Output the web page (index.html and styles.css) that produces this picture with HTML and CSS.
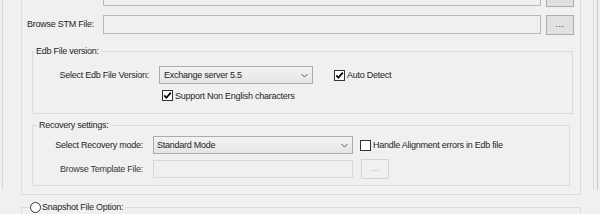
FILE: index.html
```html
<!doctype html>
<html>
<head>
<meta charset="utf-8">
<title>Edb Options</title>
<link rel="stylesheet" href="styles.css">
</head>

<body>
<div class="window">
  <div class="frame">
    <div class="outer">
      <div class="row">
        <span class="lbl">Browse Edb File:</span>
        <div class="text-box"></div>
        <div class="btn">...</div>
      </div>
      <div class="row">
        <span class="lbl">Browse STM File:</span>
        <div class="text-box"></div>
        <div class="btn">...</div>
      </div>

      <fieldset class="box box-edb">
        <legend>Edb File version:</legend>
        <div class="line">
          <span class="lbl-edb">Select Edb File Version:</span>
          <div class="combo combo-edb">
            <span>Exchange server 5.5</span>
            <svg class="arrow" width="7" height="5" viewBox="0 0 7 5"><polyline points="0.5,1 3.5,4 6.5,1" fill="none" stroke="#555" stroke-width="1"/></svg>
          </div>
          <div class="chk">
            <span class="tick"><svg width="9" height="9" viewBox="0 0 9 9"><polyline points="1.3,4.4 3.4,6.8 7.8,1.6" fill="none" stroke="#000" stroke-width="1.7"/></svg></span>
            <span>Auto Detect</span>
          </div>
        </div>
        <div class="line line-sub">
          <div class="chk">
            <span class="tick"><svg width="9" height="9" viewBox="0 0 9 9"><polyline points="1.3,4.4 3.4,6.8 7.8,1.6" fill="none" stroke="#000" stroke-width="1.7"/></svg></span>
            <span>Support Non English characters</span>
          </div>
        </div>
      </fieldset>

      <fieldset class="box box-rec">
        <legend>Recovery settings:</legend>
        <div class="line">
          <span class="lbl-rec">Select Recovery mode:</span>
          <div class="combo combo-rec">
            <span>Standard Mode</span>
            <svg class="arrow" width="7" height="5" viewBox="0 0 7 5"><polyline points="0.5,1 3.5,4 6.5,1" fill="none" stroke="#555" stroke-width="1"/></svg>
          </div>
          <div class="chk">
            <span class="tick"></span>
            <span>Handle Alignment errors in Edb file</span>
          </div>
        </div>
        <div class="line line-tpl">
          <span class="lbl-rec dim">Browse Template File:</span>
          <div class="text-box off"></div>
          <div class="btn off">...</div>
        </div>
      </fieldset>
    </div>

    <fieldset class="box box-snap">
      <legend><span class="radio"></span>Snapshot File Option:</legend>
    </fieldset>
  </div>
</div>
</body>
</html>
```

FILE: styles.css
```css
*{margin:0; padding:0; box-sizing:border-box;}
body{background:#f0f0f0; width:600px; height:214px; overflow:hidden; font:9px "Liberation Sans",Arial,sans-serif; letter-spacing:-0.25px; color:#1e1e1e; white-space:nowrap;}
.window{width:598px; height:214px; border-right:1px solid #c8c8c8;}
.frame{margin-left:2px; width:592px; height:214px; border-left:1px solid #d6d6d6; border-right:1px solid #dcdcdc;}

.outer{margin:-24px 0 0 18px; width:560px; padding:10px 6px 8px 5px; border:1px solid #dcdcdc;}
.row{display:flex; align-items:flex-start; height:20px;}
.row + .row{margin-top:8px;}
.lbl{width:76px; line-height:19px;}
.text-box{width:438px; height:19px; border:1px solid #b8b8b8; margin-right:5px;}
.btn{width:28px; height:20px; border:1px solid #adadad; background:#e1e1e1; color:#1c1c5e; text-align:center; line-height:17px; letter-spacing:0.5px;}

.box{border:1px solid #dcdcdc; margin-left:5px;}
.box legend{padding:0 2px; line-height:13px; margin-left:1px;}
.box-edb{width:541px; margin-top:10px; padding:8px 0 11px 0;}
.box-rec{width:538px; margin-top:5px; padding:4px 0 6px 0;}
.box-rec legend{margin-left:4px;}

.line{display:flex; align-items:center; height:18px;}
.lbl-edb{width:116px; text-align:right; margin-right:10px;}
.lbl-rec{width:110px; text-align:right; margin-right:10px;}
.dim{color:#3a3a3a;}
.combo{height:18px; border:1px solid #acacac; background:linear-gradient(#f3f3f3,#e5e5e5); display:flex; align-items:center; justify-content:space-between; padding:0 4px 0 3px;}
.combo-edb{width:154px; margin-right:21px; padding-left:4px;}
.combo-rec{width:200px; margin-right:7px;}
.chk{display:flex; align-items:center;}
.tick{width:11px; height:11px; border:1px solid #333; background:#fff; margin-right:2px; display:flex; align-items:center; justify-content:center;}
.line-sub{height:13px; margin-top:5px; padding-left:129px;}
.line-tpl{height:20px; margin-top:5px;}
.text-box.off{width:200px; height:18px; border-color:#d9d9d9; margin-right:8px;}
.btn.off{border-color:#d3d3d3; background:#f0f0f0; color:#a9a9a9;}

.box-snap{margin:6px 0 0 18px; width:560px; height:30px;}
.box-snap legend{margin-left:8px; padding:0 2px 0 0; display:flex; align-items:center;}
.radio{width:11px; height:11px; border:1px solid #333; border-radius:50%; background:#fff; margin-right:1px;}
```
